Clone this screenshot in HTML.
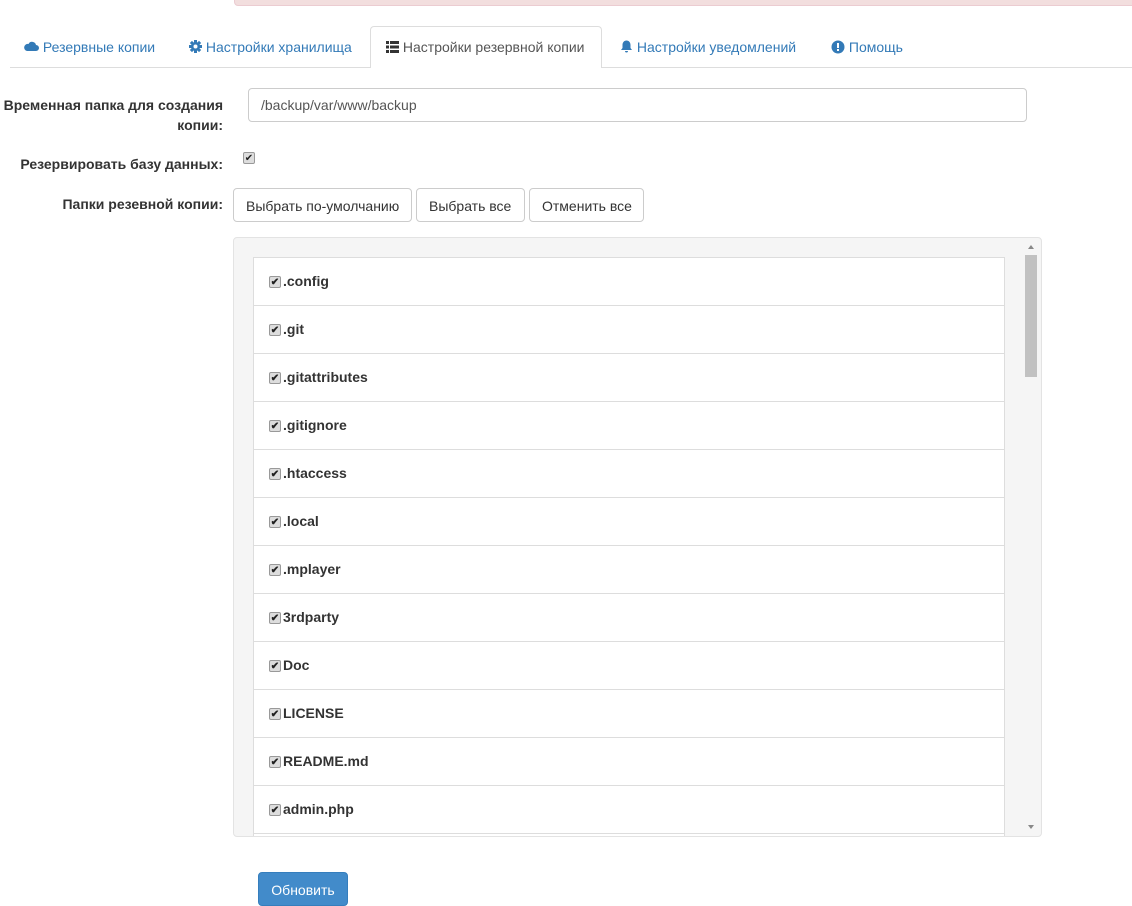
<!DOCTYPE html>
<html><head><meta charset="utf-8"><style>
*{box-sizing:border-box}
body{margin:0;width:1132px;height:901px;overflow:hidden;background:#fff;font-family:"Liberation Sans",Arial,sans-serif;font-size:14px;color:#333;position:relative}
.a{position:absolute}
.alert{left:234px;top:-4px;width:910px;height:10px;background:#f2dede;border:1px solid #ebccd1;border-radius:4px}
.tabline{left:10px;top:67px;width:1122px;height:1px;background:#ddd}
.tab{top:39px;color:#337ab7;white-space:nowrap;font-size:14px}
.act{left:370px;top:26px;width:232px;height:42px;border:1px solid #ddd;border-bottom:none;border-radius:4px 4px 0 0;background:#fff}
.lbl{font-weight:bold;text-align:right;white-space:nowrap;color:#333}
.inp{left:248px;top:88px;width:779px;height:34px;border:1px solid #ccc;border-radius:4px;padding:8px 12px;color:#555}
.btn{top:188px;height:34px;border:1px solid #ccc;border-radius:4px;padding:9px 12px;color:#333;background:#fff;white-space:nowrap}
.cb{display:inline-block;width:12px;height:12px;border:1px solid #999;border-radius:2px;background:#ddd;font-size:10px;line-height:11px;text-align:center;color:#222;vertical-align:1px;margin-right:2px}
.panel{left:233px;top:237px;width:809px;height:600px;background:#f5f5f5;border:1px solid #e3e3e3;border-radius:4px;overflow:hidden}
.list{position:absolute;left:19px;top:19px;width:752px;background:#fff;border:1px solid #ddd;border-bottom:none}
.it{height:48px;border-bottom:1px solid #ddd;padding:15px 15px 13px;font-weight:bold;white-space:nowrap}
</style></head><body>
<div class="a alert"></div>
<div class="a tabline"></div>
<div class="a act"></div>
<div class="a tab" style="left:24px"><svg width="15" height="11" viewBox="0 0 15 11" style="vertical-align:0"><path d="M3 10h9a3 3 0 0 0 0-6 4 4 0 0 0-7.5-1A3.5 3.5 0 0 0 3 10z" fill="#337ab7"/></svg> Резервные копии</div>
<div class="a tab" style="left:189px"><svg width="13" height="13" viewBox="0 0 13 13" style="vertical-align:-1px"><g fill="#337ab7"><circle cx="6.5" cy="6.5" r="4.5"/><rect x="5" y="0" width="3" height="13"/><rect x="0" y="5" width="13" height="3"/><rect x="5" y="0" width="3" height="13" transform="rotate(45 6.5 6.5)"/><rect x="5" y="0" width="3" height="13" transform="rotate(-45 6.5 6.5)"/></g><circle cx="6.5" cy="6.5" r="2" fill="#fff"/></svg> Настройки хранилища</div>
<div class="a tab" style="left:386px;color:#555"><svg width="13" height="12" viewBox="0 0 13 12" style="vertical-align:-1px"><g fill="#333"><rect x="0" y="0" width="3" height="3"/><rect x="4" y="0" width="9" height="3"/><rect x="0" y="4.5" width="3" height="3"/><rect x="4" y="4.5" width="9" height="3"/><rect x="0" y="9" width="3" height="3"/><rect x="4" y="9" width="9" height="3"/></g></svg> Настройки резервной копии</div>
<div class="a tab" style="left:620px"><svg width="13" height="13" viewBox="0 0 13 13" style="vertical-align:-1px"><path d="M6.5 0.5c-2.5 0-4 2-4 4.5v3L1 10h11l-1.5-2V5c0-2.5-1.5-4.5-4-4.5zM5 11h3a1.5 1.5 0 0 1-3 0z" fill="#337ab7"/></svg> Настройки уведомлений</div>
<div class="a tab" style="left:831px"><svg width="14" height="14" viewBox="0 0 14 14" style="vertical-align:-2px"><circle cx="7" cy="7" r="6.5" fill="#337ab7"/><rect x="6" y="3" width="2" height="5" fill="#fff"/><rect x="6" y="9" width="2" height="2" fill="#fff"/></svg> Помощь</div>

<div class="a lbl" style="right:909px;top:95px;line-height:20px">Временная папка для создания<br>копии:</div>
<div class="a inp">/backup/var/www/backup</div>
<div class="a lbl" style="right:909px;top:156px">Резервировать базу данных:</div>
<div class="a" style="left:243px;top:149px"><span class="cb">✔</span></div>
<div class="a lbl" style="right:909px;top:196px">Папки резевной копии:</div>
<div class="a btn" style="left:233px;width:179px">Выбрать по-умолчанию</div>
<div class="a btn" style="left:416px;width:109px">Выбрать все</div>
<div class="a btn" style="left:529px;width:115px">Отменить все</div>

<div class="a panel">
<div class="list">
<div class="it"><span class="cb">✔</span>.config</div>
<div class="it"><span class="cb">✔</span>.git</div>
<div class="it"><span class="cb">✔</span>.gitattributes</div>
<div class="it"><span class="cb">✔</span>.gitignore</div>
<div class="it"><span class="cb">✔</span>.htaccess</div>
<div class="it"><span class="cb">✔</span>.local</div>
<div class="it"><span class="cb">✔</span>.mplayer</div>
<div class="it"><span class="cb">✔</span>3rdparty</div>
<div class="it"><span class="cb">✔</span>Doc</div>
<div class="it"><span class="cb">✔</span>LICENSE</div>
<div class="it"><span class="cb">✔</span>README.md</div>
<div class="it"><span class="cb">✔</span>admin.php</div>
<div class="it"></div>
</div>
<div class="a" style="left:791px;top:17px;width:12px;height:122px;background:#c1c1c1"></div>
<div class="a" style="left:794px;top:7px;width:0;height:0;border-left:3px solid transparent;border-right:3px solid transparent;border-bottom:4px solid #888"></div>
<div class="a" style="left:794px;top:587px;width:0;height:0;border-left:3px solid transparent;border-right:3px solid transparent;border-top:4px solid #888"></div>
</div>

<div class="a" style="left:258px;top:872px;width:90px;height:34px;background:#428bca;border:1px solid #357ebd;border-radius:4px;color:#fff;padding:9px 0;text-align:center">Обновить</div>
</body></html>
